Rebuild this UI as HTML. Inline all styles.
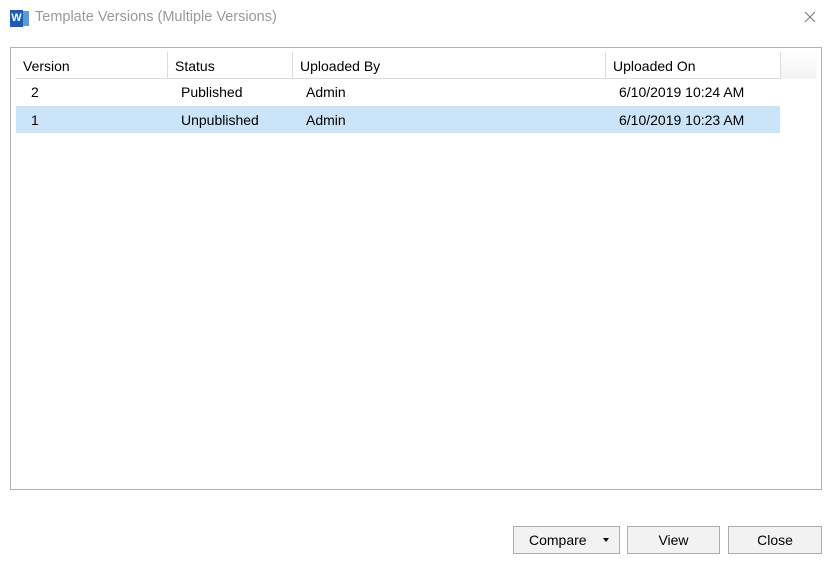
<!DOCTYPE html>
<html><head><style>
body{margin:0;width:830px;height:565px;background:#fff;font-family:"Liberation Sans",sans-serif;font-size:14px;color:#000;position:relative;overflow:hidden}
.a{position:absolute}
.title{left:35px;top:9px;color:#999;font-size:14.5px}
.box{left:10px;top:47px;width:810px;height:441px;border:1px solid #b4b4b4}
.hdr{top:52px;height:27px;border-right:1px solid #dcdcdc;border-bottom:1px solid #dcdcdc;box-sizing:border-box;line-height:28px;padding-left:7px}
.sel{left:16px;top:106px;width:764px;height:27px;background:#cce4f7}
.c{line-height:28px}
.btn{top:526px;height:28px;border:1px solid #adadad;background:#f2f2f2;box-sizing:border-box;text-align:center;line-height:26px}
</style></head><body>
<div class="a" style="left:10px;top:10px;width:19px;height:17px">
<div class="a" style="left:6px;top:1px;width:13px;height:15px;background:#5b9bd5"></div>
<div class="a" style="left:0;top:0;width:13px;height:17px;background:#1e5bb5;color:#fff;font-size:11px;font-weight:bold;text-align:center;line-height:17px">W</div>
</div>
<div class="a title">Template Versions (Multiple Versions)</div>
<svg class="a" style="left:804px;top:11px" width="12" height="12"><path d="M1 1L11 11M11 1L1 11" stroke="#777" stroke-width="1"/></svg>
<div class="a box"></div>
<div class="a" style="left:780px;top:52px;width:36px;height:27px;background:linear-gradient(#fff,#f2f2f2)"></div>
<div class="a hdr" style="left:16px;width:152px">Version</div>
<div class="a hdr" style="left:168px;width:125px">Status</div>
<div class="a hdr" style="left:293px;width:313px">Uploaded By</div>
<div class="a hdr" style="left:606px;width:175px">Uploaded On</div>
<div class="a sel"></div>
<div class="a c" style="left:31px;top:78px">2</div>
<div class="a c" style="left:181px;top:78px">Published</div>
<div class="a c" style="left:306px;top:78px">Admin</div>
<div class="a c" style="left:619px;top:78px">6/10/2019 10:24 AM</div>
<div class="a c" style="left:31px;top:106px">1</div>
<div class="a c" style="left:181px;top:106px">Unpublished</div>
<div class="a c" style="left:306px;top:106px">Admin</div>
<div class="a c" style="left:619px;top:106px">6/10/2019 10:23 AM</div>
<div class="a btn" style="left:513px;width:107px;text-align:left;padding-left:15px">Compare<span class="a" style="left:89px;top:11px;width:0;height:0;border-left:3.5px solid transparent;border-right:3.5px solid transparent;border-top:4px solid #000"></span></div>
<div class="a btn" style="left:627px;width:93px">View</div>
<div class="a btn" style="left:728px;width:94px">Close</div>
</body></html>
